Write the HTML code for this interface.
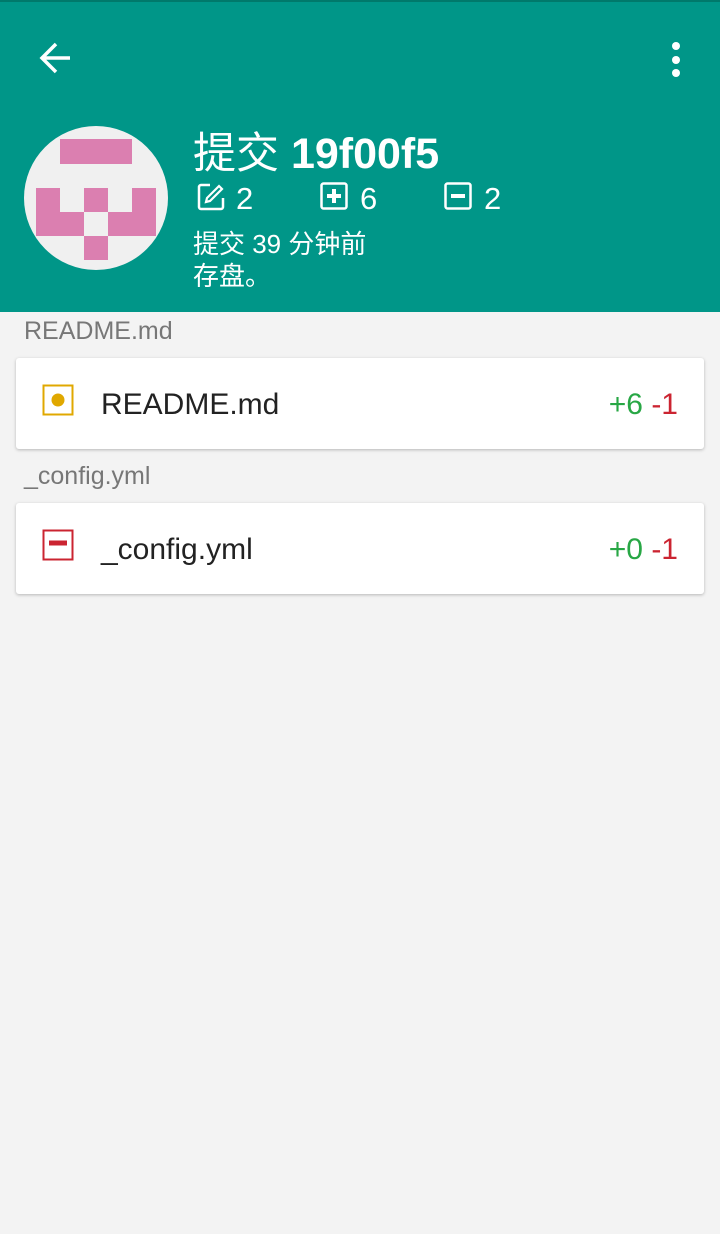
<!DOCTYPE html>
<html><head><meta charset="utf-8"><style>
body{margin:0;width:720px;height:1234px;background:#f3f3f3;font-family:"Liberation Sans","Noto Sans CJK SC",sans-serif;position:relative;overflow:hidden}
.hdr{position:absolute;left:0;top:0;width:720px;height:312px;background:#009688;border-top:2px solid #00796b;box-sizing:border-box}
.abs{position:absolute}
.p{position:absolute;background:#db7fb0}
.t{color:#fff;position:absolute;white-space:nowrap}
.card{position:absolute;left:16px;width:688px;height:91px;background:#fff;border-radius:3px;box-shadow:0 1px 3px rgba(0,0,0,.25)}
.lbl{position:absolute;left:24px;font-size:25px;color:#777}
.fn{position:absolute;left:85px;top:30px;font-size:30px;color:#222}
.st{position:absolute;right:26px;top:30px;font-size:30px}
</style></head><body>
<div class="hdr">
<svg class="abs" style="left:36px;top:36px" width="40" height="40" viewBox="0 0 40 40"><path d="M34 20H8M20 6L6 20l14 14" stroke="#fff" stroke-width="3.5" fill="none"/></svg>
<div class="abs" style="left:672px;top:40px;width:8px;height:8px;border-radius:50%;background:#fff"></div>
<div class="abs" style="left:672px;top:54px;width:8px;height:8px;border-radius:50%;background:#fff"></div>
<div class="abs" style="left:672px;top:67px;width:8px;height:8px;border-radius:50%;background:#fff"></div>
<div class="abs" style="left:24px;top:124px;width:144px;height:144px;border-radius:50%;background:#f0f0f0;overflow:hidden">
<div class="p" style="left:36px;top:13px;width:72px;height:25px"></div>
<div class="p" style="left:12px;top:62px;width:24px;height:48px"></div>
<div class="p" style="left:108px;top:62px;width:24px;height:48px"></div>
<div class="p" style="left:12px;top:86px;width:48px;height:24px"></div>
<div class="p" style="left:84px;top:86px;width:48px;height:24px"></div>
<div class="p" style="left:60px;top:62px;width:24px;height:24px"></div>
<div class="p" style="left:60px;top:110px;width:24px;height:24px"></div>
</div>
<div class="t" style="left:193px;top:117px;font-size:43px">提交 <b>19f00f5</b></div>
<svg class="abs" style="left:196px;top:180px" width="30" height="30" viewBox="0 0 30 30"><path d="M14 3H5a2 2 0 0 0-2 2v20a2 2 0 0 0 2 2h20a2 2 0 0 0 2-2v-9" stroke="#fff" stroke-width="2.5" fill="none"/><path d="M23 4l3 3-12 12-4 1 1-4z" stroke="#fff" stroke-width="2.2" fill="none"/></svg>
<div class="t" style="left:236px;top:179px;font-size:31px">2</div>
<svg class="abs" style="left:320px;top:180px" width="28" height="28" viewBox="0 0 28 28"><rect x="1.5" y="1.5" width="25" height="25" rx="2" stroke="#fff" stroke-width="2.5" fill="none"/><path d="M14 7v14M7 14h14" stroke="#fff" stroke-width="4"/></svg>
<div class="t" style="left:360px;top:179px;font-size:31px">6</div>
<svg class="abs" style="left:444px;top:180px" width="28" height="28" viewBox="0 0 28 28"><rect x="1.5" y="1.5" width="25" height="25" rx="2" stroke="#fff" stroke-width="2.5" fill="none"/><path d="M7 14h14" stroke="#fff" stroke-width="4"/></svg>
<div class="t" style="left:484px;top:179px;font-size:31px">2</div>
<div class="t" style="left:193px;top:222px;font-size:26px">提交 39 分钟前</div>
<div class="t" style="left:193px;top:254px;font-size:26px">存盘。</div>
</div>
<div class="lbl" style="top:317px">README.md</div>
<div class="card" style="top:358px">
<svg class="abs" style="left:26px;top:26px" width="32" height="32" viewBox="0 0 32 32"><rect x="1.5" y="1.5" width="29" height="29" stroke="#e0a800" stroke-width="2" fill="none"/><circle cx="16" cy="16" r="6.5" fill="#e0a800"/></svg>
<div class="fn">README.md</div>
<div class="st"><span style="color:#28a745">+6</span> <span style="color:#cb2431">-1</span></div>
</div>
<div class="lbl" style="top:462px">_config.yml</div>
<div class="card" style="top:503px">
<svg class="abs" style="left:26px;top:26px" width="32" height="32" viewBox="0 0 32 32"><rect x="1.5" y="1.5" width="29" height="29" stroke="#cb2431" stroke-width="2" fill="none"/><path d="M7 14h18" stroke="#cb2431" stroke-width="5"/></svg>
<div class="fn">_config.yml</div>
<div class="st"><span style="color:#28a745">+0</span> <span style="color:#cb2431">-1</span></div>
</div>
</body></html>
